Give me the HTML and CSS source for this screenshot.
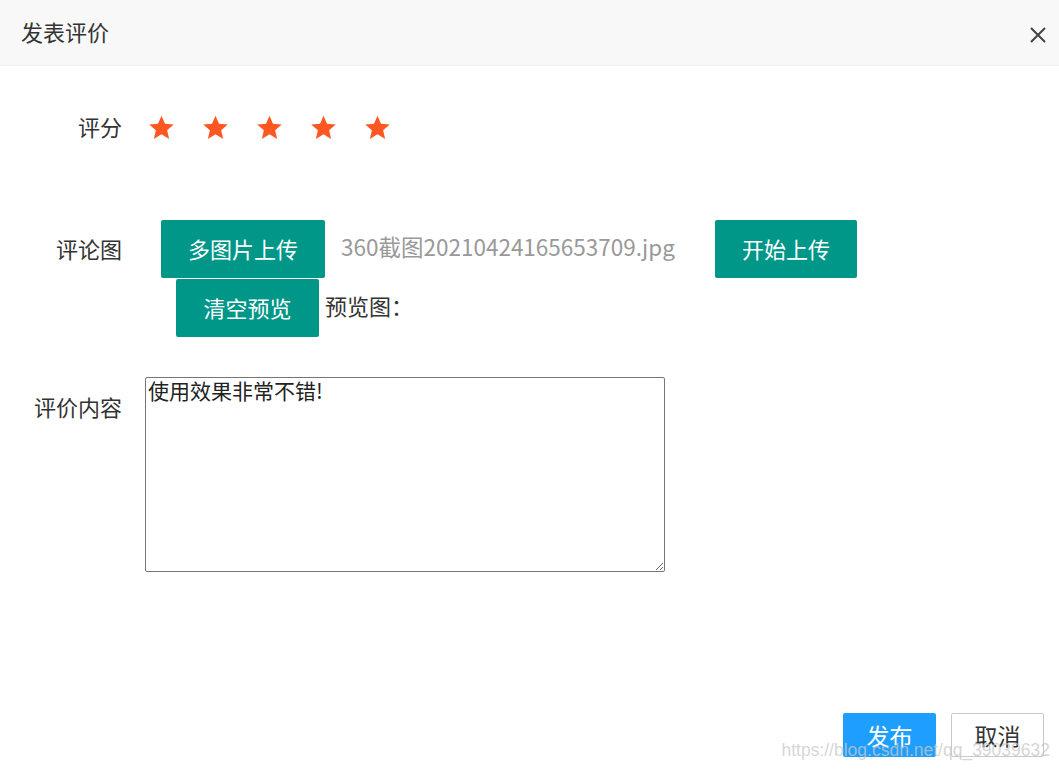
FILE: index.html
```html
<!DOCTYPE html>
<html lang="zh-CN">
<head>
    <meta charset="UTF-8">
    <meta name="viewport" content="width=device-width, initial-scale=1.0">
    <title>发表评价</title>
    <link rel="stylesheet" href="styles.css">
</head>
<body>
    <div class="dialog">
        <div class="dialog-header">
            <span class="dialog-title">发表评价</span>
            <button class="close-btn" aria-label="关闭">
                <svg width="18" height="18" viewBox="0 0 18 18">
                    <path d="M2 2L16 16M16 2L2 16" stroke="#444" stroke-width="2" fill="none"/>
                </svg>
            </button>
        </div>

        <div class="dialog-body">
            <div class="form-row rate-row">
                <label class="form-label rate-label">评分</label>
                <div class="stars">
                    <svg class="star" viewBox="0 0 24 24"><path d="M12 1.5l3.1 7.2 7.8.7-5.9 5.1 1.8 7.7L12 18.1l-6.8 4.1 1.8-7.7-5.9-5.1 7.8-.7z"/></svg>
                    <svg class="star" viewBox="0 0 24 24"><path d="M12 1.5l3.1 7.2 7.8.7-5.9 5.1 1.8 7.7L12 18.1l-6.8 4.1 1.8-7.7-5.9-5.1 7.8-.7z"/></svg>
                    <svg class="star" viewBox="0 0 24 24"><path d="M12 1.5l3.1 7.2 7.8.7-5.9 5.1 1.8 7.7L12 18.1l-6.8 4.1 1.8-7.7-5.9-5.1 7.8-.7z"/></svg>
                    <svg class="star" viewBox="0 0 24 24"><path d="M12 1.5l3.1 7.2 7.8.7-5.9 5.1 1.8 7.7L12 18.1l-6.8 4.1 1.8-7.7-5.9-5.1 7.8-.7z"/></svg>
                    <svg class="star" viewBox="0 0 24 24"><path d="M12 1.5l3.1 7.2 7.8.7-5.9 5.1 1.8 7.7L12 18.1l-6.8 4.1 1.8-7.7-5.9-5.1 7.8-.7z"/></svg>
                </div>
            </div>

            <div class="form-row upload-row">
                <label class="form-label upload-label">评论图</label>
                <div class="uploader">
                    <div class="upload-line">
                        <button class="btn btn-green btn-multi">多图片上传</button>
                        <span class="file-name">360截图20210424165653709.jpg</span>
                        <button class="btn btn-green btn-start">开始上传</button>
                    </div>
                    <div class="preview-line">
                        <button class="btn btn-green btn-clear">清空预览</button>
                        <span class="preview-text">预览图：</span>
                    </div>
                </div>
            </div>

            <div class="form-row content-row">
                <label class="form-label content-label">评价内容</label>
                <textarea class="content-input">使用效果非常不错!</textarea>
            </div>
        </div>

        <div class="dialog-footer">
            <button class="btn btn-blue">发布</button>
            <button class="btn btn-plain">取消</button>
        </div>

        <div class="watermark">https://blog.csdn.net/qq_39039632</div>
    </div>
</body>
</html>
```

FILE: styles.css
```css
* {
    margin: 0;
    padding: 0;
    box-sizing: border-box;
}

body {
    font-family: "Noto Sans CJK SC", "Noto Sans", sans-serif;
    color: #333;
    background: #fff;
}

.dialog {
    position: relative;
    height: 100vh;
    display: flex;
    flex-direction: column;
    overflow: hidden;
}

.dialog-header {
    height: 66px;
    background: #f8f8f8;
    border-bottom: 1px solid #eee;
    display: flex;
    align-items: center;
    justify-content: space-between;
    padding: 0 9px 0 21px;
}

.dialog-title {
    font-size: 22px;
    line-height: 30px;
    color: #333;
    margin-bottom: 3px;
}

.close-btn {
    border: none;
    background: none;
    width: 24px;
    height: 24px;
    display: flex;
    align-items: center;
    justify-content: center;
    margin-top: 4px;
}

.dialog-body {
    padding-top: 47px;
}

.form-row {
    display: flex;
    align-items: flex-start;
}

.form-label {
    width: 122px;
    flex-shrink: 0;
    text-align: right;
    font-size: 22px;
    line-height: 30px;
    color: #333;
}

.rate-row {
    height: 30px;
}

.rate-label {
    margin-top: -2px;
}

.stars {
    display: flex;
    gap: 27px;
    margin-left: 26px;
    height: 30px;
    align-items: center;
    margin-top: -1px;
}

.star {
    width: 27px;
    height: 27px;
    fill: #ff5722;
}

.upload-row {
    margin-top: 77px;
}

.upload-label {
    line-height: 56px;
}

.uploader {
    margin-left: 39px;
}

.upload-line {
    display: flex;
    align-items: center;
    width: 696px;
}

.btn {
    border: none;
    border-radius: 2px;
    font-family: inherit;
    font-size: 22px;
    cursor: pointer;
}

.btn-green {
    background: #009688;
    color: #fff;
    height: 58px;
    padding-bottom: 2px;
}

.btn-multi {
    width: 164px;
}

.file-name {
    margin-left: 16px;
    font-size: 22.5px;
    color: #999;
    line-height: 30px;
    margin-top: -7px;
}

.btn-start {
    width: 142px;
    margin-left: auto;
}

.preview-line {
    display: flex;
    align-items: center;
    margin-top: 1px;
    margin-left: 15px;
}

.btn-clear {
    width: 143px;
}

.preview-text {
    margin-left: 6px;
    font-size: 22px;
    color: #333;
    margin-top: -6px;
}

.content-row {
    margin-top: 40px;
}

.content-label {
    margin-top: 14px;
}

.content-input {
    margin-left: 23px;
    width: 520px;
    height: 195px;
    border: 1px solid #767676;
    border-radius: 2px;
    padding: 0 2px 2px;
    font-family: inherit;
    font-size: 21px;
    line-height: 24px;
    color: #222;
}

.dialog-footer {
    margin-top: auto;
    display: flex;
    justify-content: flex-end;
    gap: 15px;
    padding: 0 15px 12px 0;
}

.btn-blue {
    width: 93px;
    height: 44px;
    background: #1e9fff;
    color: #fff;
    font-size: 23px;
}

.btn-plain {
    width: 93px;
    height: 44px;
    background: #fff;
    color: #333;
    border: 1px solid #c9c9c9;
    font-size: 23px;
}

.watermark {
    position: absolute;
    right: 9px;
    bottom: 8px;
    font-family: "Liberation Sans", Arial, sans-serif;
    font-size: 17.5px;
    color: rgba(200, 200, 200, 0.75);
    pointer-events: none;
}
```
